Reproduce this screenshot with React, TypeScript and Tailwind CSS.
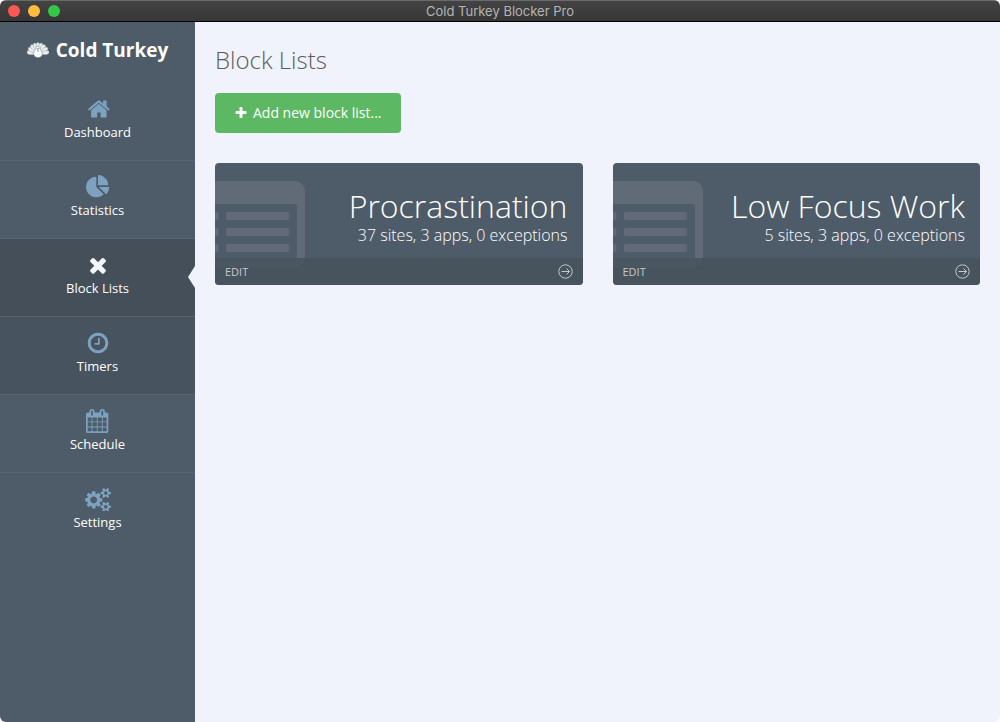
import type { ReactNode } from "react";

const cogSmall =
  "v140q0 16-149 31-12 27-30 52 51 113 51 138 0 4-4 7-122 71-124 71-8 0-46-47t-52-68q-20 2-30 2t-30-2q-14 21-52 68t-46 47q-2 0-124-71-4-3-4-7 0-25 51-138-18-25-30-52-149-15-149-31v-140q0-16 149-31 13-29 30-52-51-113-51-138 0-4 4-7 4-2 35-20t59-34 30-16q8 0 46 46.5t52 67.5q20-2 30-2t30 2q51-71 92-112l6-2q4 0 124 70 4 3 4 7 0 25-51 138 17 23 30 52 149 15 149 31z";

const paths = {
  home: "M1472 992v480q0 26-19 45t-45 19h-384v-384h-256v384h-384q-26 0-45-19t-19-45v-480q0-1 .5-3t.5-3l575-474 575 474q1 2 1 6zm223-69l-62 74q-8 9-21 11h-3q-13 0-21-7l-692-577-692 577q-12 8-24 7-13-2-21-11l-62-74q-8-10-7-23.5t11-21.5l719-599q32-26 76-26t76 26l244 204v-195q0-14 9-23t23-9h192q14 0 23 9t9 23v408l219 182q10 8 11 21.5t-7 23.5z",
  pie: "M768 890l546 546q-106 108-247.5 168t-298.5 60q-209 0-385.5-103t-279.5-279.5-103-385.5 103-385.5 279.5-279.5 385.5-103v762zm187 6h773q0 157-60 298.5t-168 247.5zm709-128h-768v-768q209 0 385.5 103t279.5 279.5 103 385.5z",
  times:
    "M1490 1322q0 40-28 68l-136 136q-28 28-68 28t-68-28l-294-294-294 294q-28 28-68 28t-68-28l-136-136q-28-28-28-68t28-68l294-294-294-294q-28-28-28-68t28-68l136-136q28-28 68-28t68 28l294 294 294-294q28-28 68-28t68 28l136 136q28 28 28 68t-28 68l-294 294 294 294q28 28 28 68z",
  clock:
    "M1024 544v448q0 14-9 23t-23 9h-320q-14 0-23-9t-9-23v-64q0-14 9-23t23-9h224v-352q0-14 9-23t23-9h64q14 0 23 9t9 23zm416 352q0-148-73-273t-198-198-273-73-273 73-198 198-73 273 73 273 198 198 273 73 273-73 198-198 73-273zm224 0q0 209-103 385.5t-279.5 279.5-385.5 103-385.5-103-279.5-279.5-103-385.5 103-385.5 279.5-279.5 385.5-103 385.5 103 279.5 279.5 103 385.5z",
  calendar:
    "M192 1664h288v-288h-288v288zm352 0h320v-288h-320v288zm-352-352h288v-320h-288v320zm352 0h320v-320h-320v320zm-352-384h288v-288h-288v288zm736 736h320v-288h-320v288zm-384-736h320v-288h-320v288zm768 736h288v-288h-288v288zm-384-352h320v-320h-320v320zm-352-864v-288q0-13-9.5-22.5t-22.5-9.5h-64q-13 0-22.5 9.5t-9.5 22.5v288q0 13 9.5 22.5t22.5 9.5h64q13 0 22.5-9.5t9.5-22.5zm736 864h288v-320h-288v320zm-384-384h320v-288h-320v288zm384 0h288v-288h-288v288zm32-480v-288q0-13-9.5-22.5t-22.5-9.5h-64q-13 0-22.5 9.5t-9.5 22.5v288q0 13 9.5 22.5t22.5 9.5h64q13 0 22.5-9.5t9.5-22.5zm384-64v1280q0 52-38 90t-90 38h-1408q-52 0-90-38t-38-90v-1280q0-52 38-90t90-38h128v-96q0-66 47-113t113-47h64q66 0 113 47t47 113v96h384v-96q0-66 47-113t113-47h64q66 0 113 47t47 113v96h128q52 0 90 38t38 90z",
  cogs:
    "M896 960q0-106-75-181t-181-75-181 75-75 181 75 181 181 75 181-75 75-181zm768 512q0-52-38-90t-90-38-90 38-38 90q0 53 37.5 90.5t90.5 37.5 90.5-37.5 37.5-90.5zm0-1024q0-52-38-90t-90-38-90 38-38 90q0 53 37.5 90.5t90.5 37.5 90.5-37.5 37.5-90.5zm-384 421v185q0 10-7 19.5t-16 10.5l-155 24q-11 35-32 76 34 48 90 115 7 11 7 20 0 12-7 19-23 30-82.5 89.5t-78.5 59.5q-11 0-21-7l-115-90q-37 19-77 31-11 108-23 155-7 24-30 24h-186q-11 0-20-7.5t-10-17.5l-23-153q-34-10-75-31l-118 89q-7 7-20 7-11 0-21-8-144-133-144-160 0-9 7-19 10-14 41-53t47-61q-23-44-35-82l-152-24q-10-1-17-9.5t-7-19.5v-185q0-10 7-19.5t16-10.5l155-24q11-35 32-76-34-48-90-115-7-11-7-20 0-12 7-20 22-30 82-89t79-59q11 0 21 7l115 90q34-18 77-32 11-108 23-154 7-24 30-24h186q11 0 20 7.5t10 17.5l23 153q34 10 75 31l118-89q8-7 20-7 11 0 21 8 144 133 144 160 0 8-7 19-12 16-42 54t-45 60q23 48 34 82l152 23q10 2 17 10.5t7 19.5z" +
    "M1920 1402" + cogSmall + "M1920 378" + cogSmall,
  plus: "M1600 736v192q0 40-28 68t-68 28h-416v416q0 40-28 68t-68 28h-192q-40 0-68-28t-28-68v-416h-416q-40 0-68-28t-28-68v-192q0-40 28-68t68-28h416v-416q0-40 28-68t68-28h192q40 0 68 28t28 68v416h416q40 0 68 28t28 68z",
};

// Left edge and width of each glyph's box; all share a height of 1792 units.
const boxes = {
  home: "0 0 1664 1792",
  pie: "0 0 1792 1792",
  times: "0 0 1792 1792",
  clock: "0 0 1792 1792",
  calendar: "64 0 1792 1792",
  cogs: "0 0 1920 1792",
  plus: "0 0 1792 1792",
};

type IconName = keyof typeof paths;

function Icon({ name, className }: { name: IconName; className: string }) {
  return (
    <svg viewBox={boxes[name]} className={className} fill="currentColor" fillRule="evenodd" aria-hidden="true">
      <path d={paths[name]} />
    </svg>
  );
}

function TurkeyLogo() {
  const feathers = [-80, -58, -37, -18, 0, 18, 37, 58, 80];
  return (
    <svg viewBox="0 0 44 32" className="h-4 w-[22px]" aria-hidden="true">
      {feathers.map((angle) => (
        <path
          key={angle}
          d="M22 27L17.800 8Q17.600 1.500 22 1Q26.400 1.500 26.200 8Z"
          fill="#eef1f3"
          stroke="#8a959e"
          strokeWidth="0.900"
          transform={`rotate(${angle} 22 24)`}
        />
      ))}
      <path
        d="M22 8.500c-2.900 0-4.200 1.700-4 4 .2 2-1.400 3.500-2.900 5.500-3.500 5-2 13 6.900 13s10.400-8 6.900-13c-1.500-2-3.100-3.500-2.900-5.500.2-2.300-1.100-4-4-4z"
        fill="#fff"
        stroke="#7d8892"
        strokeWidth="1"
      />
      <circle cx="20.300" cy="12.500" r="1" fill="#54616d" />
      <circle cx="23.700" cy="12.500" r="1" fill="#54616d" />
      <path d="M20.800 14.500h2.400l-.4 5h-1.600z" fill="#77838d" />
    </svg>
  );
}

interface NavItem {
  label: string;
  icon: IconName;
  state?: "active" | "hover";
}

const navItems: NavItem[] = [
  { label: "Dashboard", icon: "home" },
  { label: "Statistics", icon: "pie" },
  { label: "Block Lists", icon: "times", state: "active" },
  { label: "Timers", icon: "clock", state: "hover" },
  { label: "Schedule", icon: "calendar" },
  { label: "Settings", icon: "cogs" },
];

function NavLink({ label, icon, state }: NavItem) {
  const background =
    state === "active" ? "bg-[#444f5a]" : state === "hover" ? "bg-[#47535e]" : "hover:bg-[#47535e]";
  return (
    <li className="border-b border-[#576572] last:border-b-0">
      <a
        href="#"
        aria-current={state === "active" ? "page" : undefined}
        className={`relative flex h-[77px] flex-col items-center gap-px pt-3.5 text-[13px] leading-5 text-white ${background}`}
      >
        <Icon
          name={icon}
          className={`h-6 ${icon === "cogs" ? "w-[26px]" : "w-6"} ${
            state === "active" ? "text-[#f4f7fa]" : "text-[#7ca2bf]"
          }`}
        />
        {label}
        {state === "active" && (
          <svg viewBox="0 0 7 22" className="absolute right-0 top-[27px] h-[22px] w-[7px]" aria-hidden="true">
            <path d="M7 0L0 11L7 22Z" fill="#f0f3fb" />
          </svg>
        )}
      </a>
    </li>
  );
}

function ListGlyph() {
  return (
    <svg
      viewBox="0 0 90 86"
      className="absolute left-0 top-[18px] h-[86px] w-[90px] text-white/10"
      fill="currentColor"
      aria-hidden="true"
    >
      <path
        fillRule="evenodd"
        d="M0 0H80a10 10 0 0 1 10 10V76a10 10 0 0 1-10 10H0V78H80a2 2 0 0 0 2-2V25a2 2 0 0 0-2-2H0Z"
      />
      {[31, 47, 63].map((y) => (
        <g key={y}>
          <path d={`M0 ${y}h2q1.500 0 1.500 2v4q0 2-1.500 2H0z`} />
          <rect x="11" y={y} width="63" height="8" rx="2" />
        </g>
      ))}
    </svg>
  );
}

function BlockCard({ title, summary }: { title: string; summary: string }) {
  return (
    <article className="relative overflow-hidden rounded bg-[#4e5b68] text-white">
      <ListGlyph />
      <div className="relative px-[15px] pb-3 pt-6 text-right font-light">
        <h2 className="text-[32px] leading-[38px]">{title}</h2>
        <p className="text-base leading-[21px]">{summary}</p>
      </div>
      <button
        type="button"
        className="relative flex w-full items-center justify-between bg-[#46525c]/85 px-2.5 py-1 text-[11px] leading-[19px] text-[#c3c9ce]"
      >
        EDIT
        <svg viewBox="0 0 15 15" className="size-[15px]" fill="none" stroke="currentColor" aria-hidden="true">
          <circle cx="7.500" cy="7.500" r="6.700" />
          <path d="M3.500 7.500H11.500M8.500 4.500L11.500 7.500L8.500 10.500" />
        </svg>
      </button>
    </article>
  );
}

function TitleBar({ children }: { children: ReactNode }) {
  return (
    <header className="relative flex h-[22px] items-center border-b border-t border-b-black border-t-[#6a6a6a] bg-linear-to-b from-[#434343] to-[#373737] px-2">
      <div className="absolute flex gap-2">
        <button type="button" aria-label="Close" className="size-3 rounded-full bg-[#fc5753]" />
        <button type="button" aria-label="Minimize" className="size-3 rounded-full bg-[#fdbc40]" />
        <button type="button" aria-label="Zoom" className="size-3 rounded-full bg-[#34c84a]" />
      </div>
      <p className="grow text-center font-['Inter',sans-serif] text-[13px] leading-5 text-[#b5b5b5]">{children}</p>
    </header>
  );
}

export default function App() {
  return (
    <div className="flex min-h-screen flex-col overflow-hidden rounded-md bg-[#f0f3fb] font-['Open_Sans',sans-serif]">
      <TitleBar>Cold Turkey Blocker Pro</TitleBar>
      <div className="flex grow">
        <aside className="w-[195px] shrink-0 bg-[#4e5b68]">
          <div className="flex h-[61px] items-start justify-center gap-[7px] pt-3.5 text-white">
            <span className="flex h-7 items-center">
              <TurkeyLogo />
            </span>
            <span className="text-[19px] font-bold leading-7">Cold Turkey</span>
          </div>
          <nav>
            <ul>
              {navItems.map((item) => (
                <NavLink key={item.label} {...item} />
              ))}
            </ul>
          </nav>
        </aside>
        <main className="grow px-5 pt-5">
          <h1 className="text-2xl font-light leading-9 text-[#5c5c5c]">Block Lists</h1>
          <button
            type="button"
            className="mt-[15px] flex h-10 items-center gap-[5px] rounded bg-[#5cb863] px-[19px] text-sm font-medium text-white"
          >
            <Icon name="plus" className="size-3.5" />
            Add new block list...
          </button>
          <div className="mt-[30px] grid grid-cols-2 gap-[30px]">
            <BlockCard title="Procrastination" summary="37 sites, 3 apps, 0 exceptions" />
            <BlockCard title="Low Focus Work" summary="5 sites, 3 apps, 0 exceptions" />
          </div>
        </main>
      </div>
    </div>
  );
}
